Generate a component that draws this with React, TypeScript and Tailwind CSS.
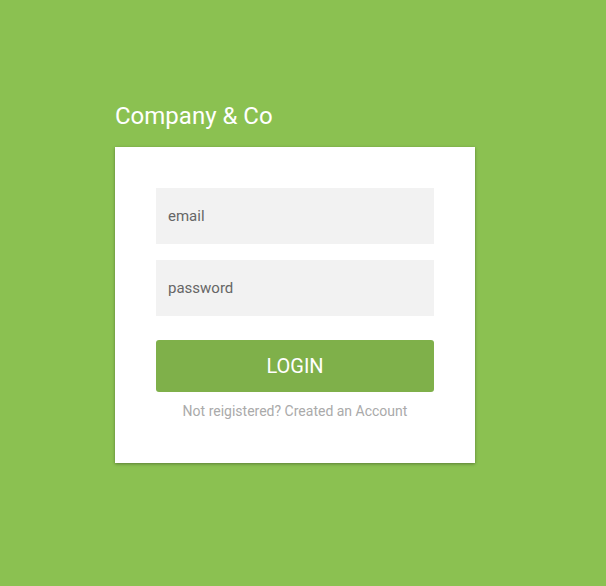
export default function App() {
  return (
    <div className="min-h-[586px] w-full bg-[#8bc151] font-['Roboto',sans-serif] pt-[100px]">
      <div className="ml-[115px] w-[360px]">
        <h1 className="text-[24px] leading-[32px] text-white mb-[15px]">Company &amp; Co</h1>
        <div className="bg-white px-[41px] pt-[41px] pb-[42px] shadow-[0_1px_3px_rgba(0,0,0,0.35)]">
          <form className="flex flex-col" onSubmit={(e) => e.preventDefault()}>
            <input
              type="text"
              placeholder="email"
              className="h-[56px] w-full bg-[#f2f2f2] px-3 text-[15px] text-[#555] placeholder:text-[#666] outline-none"
            />
            <input
              type="password"
              placeholder="password"
              className="mt-4 h-[56px] w-full bg-[#f2f2f2] px-3 text-[15px] text-[#555] placeholder:text-[#666] outline-none"
            />
            <button
              type="submit"
              className="mt-6 h-[52px] w-full rounded-[3px] bg-[#7fb04a] text-[20px] font-normal uppercase text-white"
            >
              Login
            </button>
            <p className="mt-[9px] text-center text-[14px] leading-[20px] text-[#aaaaaa]">
              Not reigistered? <a href="#" className="text-[#aaaaaa]">Created an Account</a>
            </p>
          </form>
        </div>
      </div>
    </div>
  );
}
